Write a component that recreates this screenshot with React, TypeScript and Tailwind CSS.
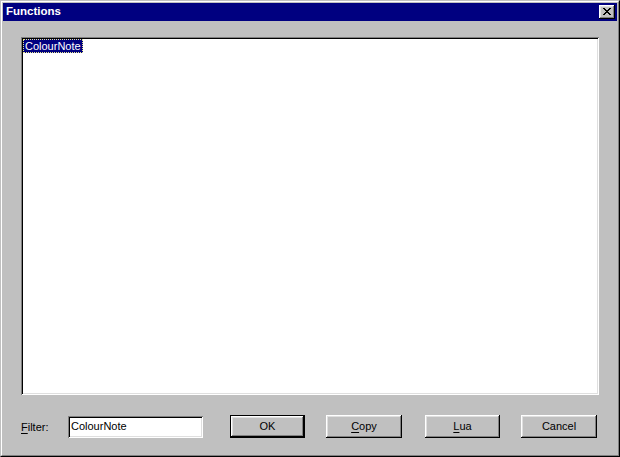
const font = { fontFamily: '"Liberation Sans", Arial, sans-serif' };

const raised =
  "shadow-[inset_-1px_-1px_0_#000,inset_1px_1px_0_#fff,inset_-2px_-2px_0_#808080,inset_2px_2px_0_#dfdfdf]";
const sunken =
  "shadow-[inset_1px_1px_0_#808080,inset_-1px_-1px_0_#fff,inset_2px_2px_0_#000,inset_-2px_-2px_0_#dfdfdf]";

function Button({
  label,
  hot,
  def,
  className,
}: {
  label: string;
  hot?: number;
  def?: boolean;
  className?: string;
}) {
  const text =
    hot === undefined ? (
      label
    ) : (
      <>
        {label.slice(0, hot)}
        <span className="underline underline-offset-2">{label[hot]}</span>
        {label.slice(hot + 1)}
      </>
    );
  return (
    <div
      className={`h-[23px] flex items-center justify-center bg-[#c0c0c0] text-[11px] text-black ${
        def ? "border border-black" : ""
      } ${className ?? ""}`}
    >
      <div className={`w-full h-full flex items-center justify-center ${raised}`}>
        <span>{text}</span>
      </div>
    </div>
  );
}

export default function App() {
  return (
    <div
      className="w-[620px] h-[457px] bg-[#c0c0c0] border border-t-[#c0c0c0] border-l-[#c0c0c0] border-r-black border-b-black"
      style={font}
    >
      <div className="h-full border border-t-white border-l-white border-r-[#808080] border-b-[#808080] p-px flex flex-col">
        {/* Title bar */}
        <div className="h-[18px] bg-[#000080] flex items-center justify-between pl-[3px] pr-[2px]">
          <span className="text-white font-bold text-[11.5px] leading-none">Functions</span>
          <div className={`w-[16px] h-[14px] bg-[#c0c0c0] flex items-center justify-center ${raised}`}>
            <svg width="8" height="7" viewBox="0 0 8 7" className="-mt-px">
              <path
                d="M0 0h2v1h1v1h2V1h1V0h2v1H7v1H6v1H5v1h1v1h1v1h1v1H6V6H5V5H3v1H2v1H0V6h1V5h1V4h1V3H2V2H1V1H0z"
                fill="#000"
              />
            </svg>
          </div>
        </div>

        {/* Content */}
        <div className="flex-1 flex flex-col px-[18px] pt-[16px] pb-[16px]">
          <div className={`h-[358px] bg-white p-[2px] ${sunken}`}>
            <div className="flex items-start pt-[0px]">
              <span className="flex items-center h-[14px] px-px bg-[#000080] text-white text-[11px] leading-none border border-dotted border-[#e8e890]">
                ColourNote
              </span>
            </div>
          </div>

          <div className="mt-[20px] flex items-center h-[23px]">
            <span className="text-[11px] text-black w-[47px] mt-[2px]">
              <span className="underline underline-offset-2">F</span>ilter:
            </span>
            <div className={`w-[135px] h-[22px] bg-white flex items-center pl-[3px] ${sunken}`}>
              <span className="text-[11px] text-black">ColourNote</span>
            </div>
            <Button label="OK" def className="w-[75px] ml-[27px]" />
            <Button label="Copy" hot={0} className="w-[76px] ml-[21px]" />
            <Button label="Lua" hot={0} className="w-[75px] ml-[23px]" />
            <Button label="Cancel" className="w-[76px] ml-[21px]" />
          </div>
        </div>
      </div>
    </div>
  );
}
